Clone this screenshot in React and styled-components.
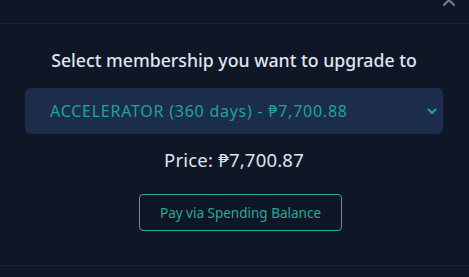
import React from "react";
import styled, { createGlobalStyle } from "styled-components";

const Global = createGlobalStyle`
  html, body { margin: 0; padding: 0; background: #0f1726; }
  body { font-family: "Noto Sans", Lato, sans-serif; }
`;

const Modal = styled.div`
  width: 469px;
  height: 277px;
  background: #0f1726;
  display: flex;
  flex-direction: column;
  overflow: hidden;
`;

const Header = styled.div`
  height: 23px;
  flex: none;
  border-bottom: 1px solid #1b2433;
  display: flex;
  justify-content: flex-end;
  align-items: flex-start;
  padding-right: 13px;
  overflow: hidden;
`;

const Close = styled.button`
  margin-top: -7px;
  padding: 0;
  border: none;
  background: transparent;
  color: #6e7889;
  display: flex;
`;

const Body = styled.div`
  flex: 1;
  display: flex;
  flex-direction: column;
  align-items: center;
  padding: 25px 26px 0 25px;
`;

const Title = styled.h2`
  margin: 0;
  font-size: 17.7px;
  font-weight: 500;
  color: #dfe5ee;
  line-height: 22px;
`;

const SelectBox = styled.div`
  margin-top: 17px;
  align-self: stretch;
  height: 46px;
  border-radius: 6px;
  background: #1b2d4a;
  display: flex;
  align-items: center;
  justify-content: space-between;
  padding: 0 5px 0 25px;
  color: #1fa39a;
  font-size: 16px;
  letter-spacing: 0.75px;
`;

const Price = styled.div`
  margin-top: 14px;
  font-size: 18.5px;
  letter-spacing: 0.2px;
  color: #dfe5ee;
  line-height: 23px;
`;

const PayButton = styled.button`
  margin-top: 23px;
  margin-left: 13px;
  width: 203px;
  height: 37px;
  border: 1px solid #26b09b;
  border-radius: 4px;
  background: transparent;
  color: #2aa897;
  font-family: inherit;
  font-size: 13.5px;
`;

const Footer = styled.div`
  height: 11px;
  flex: none;
  border-top: 1px solid #1b2433;
`;

export default function App() {
  return (
    <>
      <Global />
      <Modal>
        <Header>
          <Close aria-label="close">
            <svg width="14" height="14" viewBox="0 0 14 14">
              <path d="M2 2L12 12M12 2L2 12" stroke="currentColor" strokeWidth="2.2" strokeLinecap="round" />
            </svg>
          </Close>
        </Header>
        <Body>
          <Title>Select membership you want to upgrade to</Title>
          <SelectBox>
            <span>ACCELERATOR (360 days) - ₱7,700.88</span>
            <svg width="12" height="12" viewBox="0 0 12 12">
              <path d="M2.5 4.5L6 8L9.5 4.5" stroke="#1fa39a" strokeWidth="2" fill="none" strokeLinecap="round" />
            </svg>
          </SelectBox>
          <Price>Price: ₱7,700.87</Price>
          <PayButton>Pay via Spending Balance</PayButton>
        </Body>
        <Footer />
      </Modal>
    </>
  );
}
